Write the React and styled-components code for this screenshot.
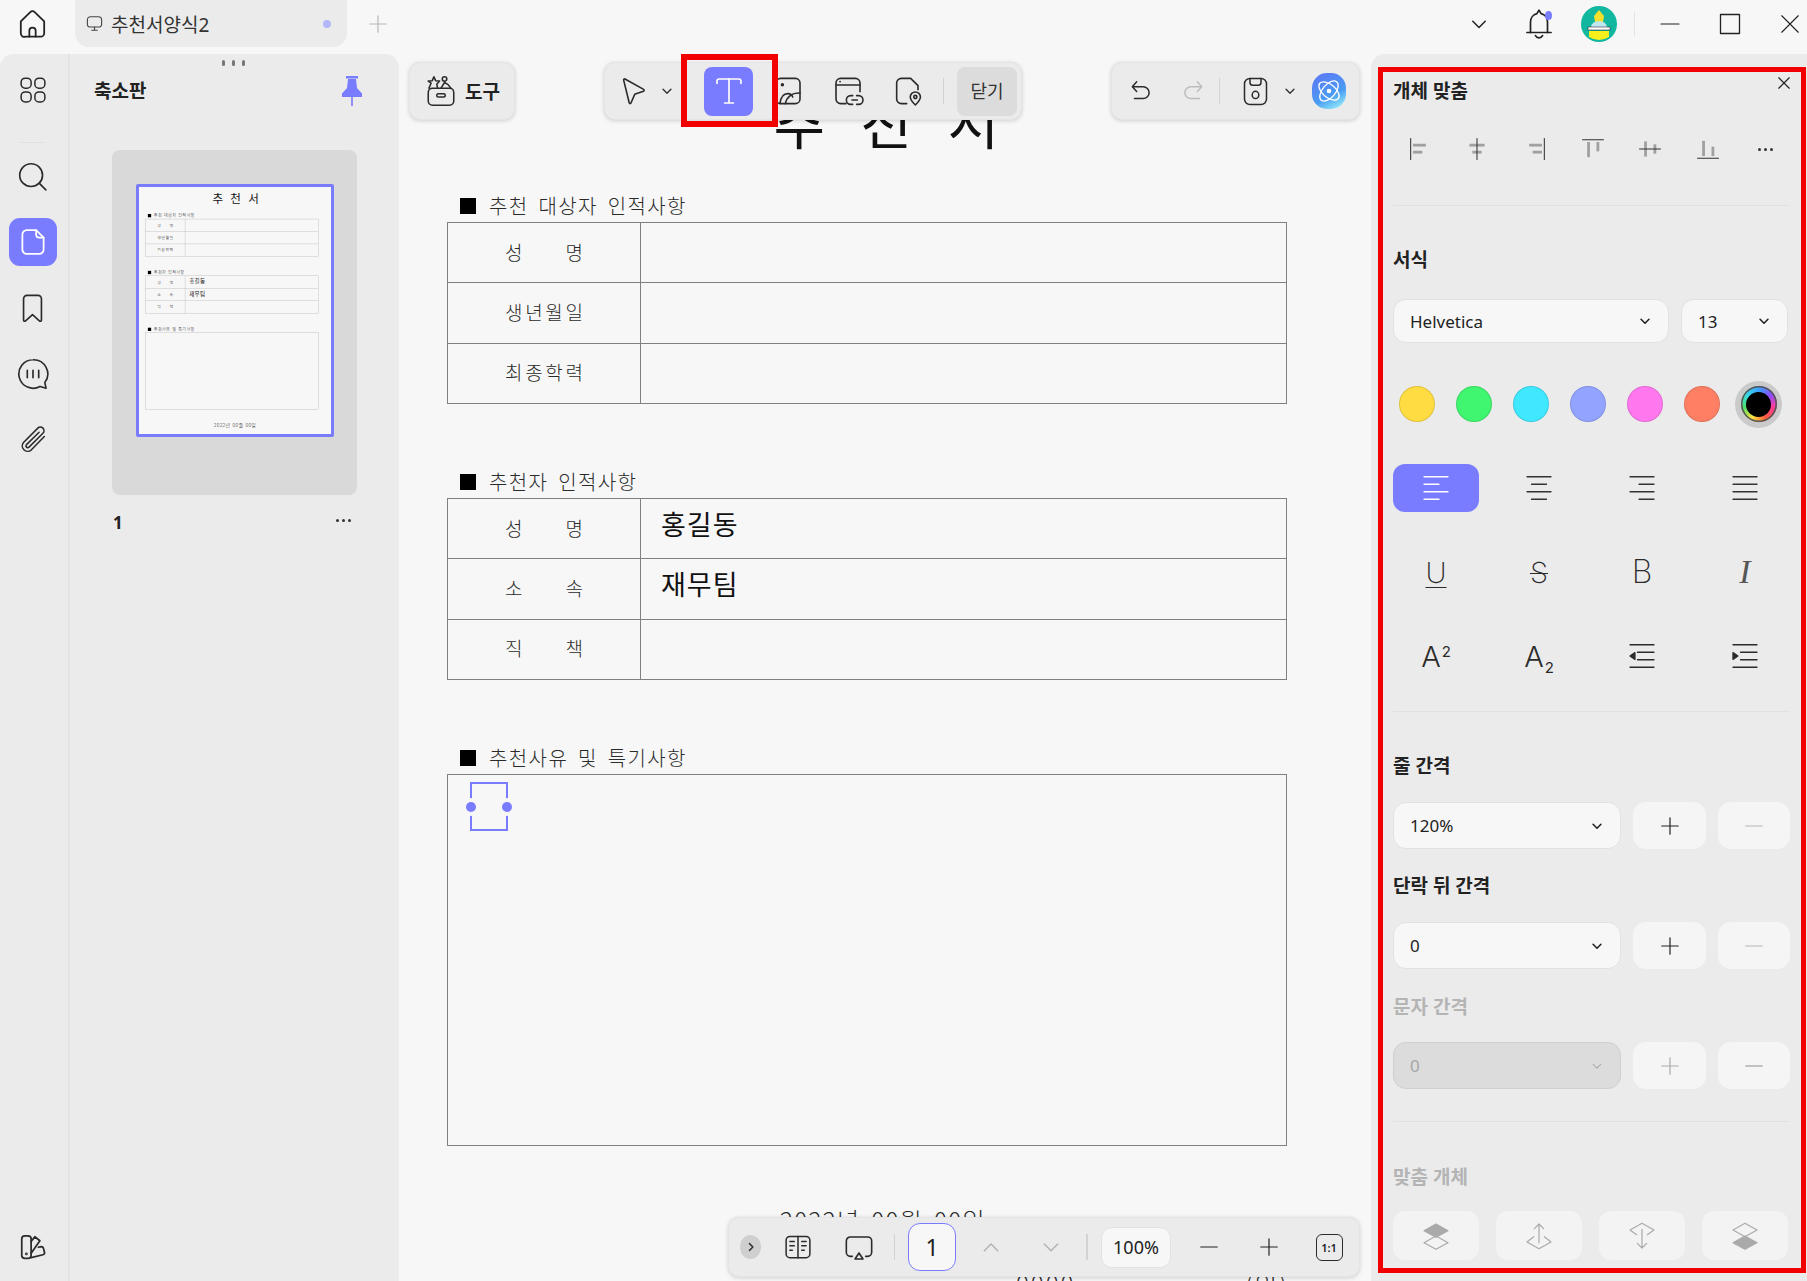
import React from "react";
import styled, { createGlobalStyle } from "styled-components";

const ACCENT = "#7a7cff";
const UI_FONT = `"Noto Sans", "Noto Sans CJK KR", sans-serif`;

const GlobalStyle = createGlobalStyle`
  html, body {
    margin: 0;
    padding: 0;
    width: 100%;
    height: 100%;
    overflow: hidden;
    background: #f7f7f7;
    font-family: ${UI_FONT};
    color: #222;
  }
  * { box-sizing: border-box; }
`;

// Icons
const Svg = styled.svg`
  display: block;
  flex: none;
  fill: none;
  stroke: ${(p) => p.$color || "currentColor"};
  stroke-width: ${(p) => p.$sw || 1.5};
  stroke-linecap: round;
  stroke-linejoin: round;
`;

const Icon = ({ size = 30, sw, color, children, box = 24 }) => (
  <Svg width={size} height={size} viewBox={`0 0 ${box} ${box}`} $sw={sw} $color={color}>
    {children}
  </Svg>
);

const HomeIcon = () => (
  <Icon size={33} sw={1.3}>
    <path d="M3.5 10.5 10.4 3.7a2.2 2.2 0 0 1 3.2 0l6.9 6.8V19a2.5 2.5 0 0 1-2.5 2.5h-11A2.5 2.5 0 0 1 3.5 19Z" />
    <path d="M9.7 21.5v-4.2a2.3 2.3 0 0 1 4.6 0v4.2" />
  </Icon>
);

const TabDocIcon = () => (
  <Icon size={19} sw={1.4} color="#444">
    <rect x="3" y="3.5" width="18" height="13" rx="4" />
    <path d="M12 16.5v4M8.5 20.5h7" />
  </Icon>
);

const GridIcon = () => (
  <Icon size={30} sw={1.2}>
    <rect x="2.5" y="2.5" width="8" height="8" rx="3.2" />
    <rect x="13.5" y="2.5" width="8" height="8" rx="3.2" />
    <rect x="2.5" y="13.5" width="8" height="8" rx="3.2" />
    <rect x="13.5" y="13.5" width="8" height="8" rx="3.2" />
  </Icon>
);

const SearchIcon = () => (
  <Icon size={33} sw={1.2}>
    <circle cx="11" cy="11" r="8.3" />
    <path d="m17 17 4.7 4.7" />
  </Icon>
);

const PageIcon = () => (
  <Icon size={30} sw={1.4} color="#fff">
    <path d="M7 2.5h7.5l6 6V18a3.5 3.5 0 0 1-3.5 3.5H7A3.5 3.5 0 0 1 3.5 18V6A3.5 3.5 0 0 1 7 2.5Z" />
    <path d="M14.5 2.5V6a2.5 2.5 0 0 0 2.5 2.5h3.5" />
  </Icon>
);

const BookmarkIcon = () => (
  <Icon size={33} sw={1.2}>
    <path d="M5.5 5a2.5 2.5 0 0 1 2.5-2.5h8A2.5 2.5 0 0 1 18.500 5v15.500a.8.8 0 0 1-1.300.6L12 16.500l-5.200 4.600a.8.8 0 0 1-1.300-.6Z" />
  </Icon>
);

const CommentIcon = () => (
  <Icon size={36} sw={1.1}>
    <path d="M12 2.500a9.500 9.500 0 1 0 4.700 17.800l4 1.200-.8-3.800A9.500 9.500 0 0 0 12 2.500Z" />
    <path d="M8.200 9.500v5M12 9.500v5M15.800 9.500v5" />
  </Icon>
);

const ClipIcon = () => (
  <Icon size={34} sw={1.1}>
    <path d="m20 9.500-9.300 9.600a3.800 3.800 0 0 1-5.400-5.300L15.400 3.600a2.500 2.500 0 0 1 3.600 3.600L9.200 17a1.200 1.200 0 0 1-1.800-1.700L16.300 6.500" />
  </Icon>
);

const SwatchIcon = () => (
  <Icon size={30} sw={1.4}>
    <rect x="3" y="3" width="7.500" height="18" rx="2.500" />
    <path d="M10.500 7.500 13.500 3.800l4 3.200-7 10M10.500 20.500l9.500-2.300a1.600 1.600 0 0 0 1.200-2l-.9-3.300a1.700 1.700 0 0 0-1.700-1.200l-2.300.5" />
    <circle cx="6.700" cy="17.500" r=".4" />
  </Icon>
);

const PinIcon = () => (
  <svg width="24" height="32" viewBox="0 0 24 32" fill={ACCENT}>
    <rect x="6" y="1" width="12" height="2.500" />
    <path d="M8 4h8l1 9 5 5.500V22H2v-3.500L7 13Z" />
    <rect x="11.200" y="22" width="1.600" height="9" />
  </svg>
);

const ToolBoxIcon = () => (
  <Icon size={34} sw={1.1}>
    <rect x="3" y="10" width="18" height="12" rx="3" />
    <rect x="9" y="14" width="6" height="2.200" rx="1.100" />
    <path d="m3.500 10 1.500-3.500-2-1.500 2.800-.3L7 2l1.200 2.700 2.800.3-2 2.200.6 2.800M12 10l2.500-4 2.500 1.500 2 2.500" />
    <circle cx="14.500" cy="3.500" r="1.600" />
  </Icon>
);

const CursorIcon = () => (
  <Icon size={32} sw={1.2}>
    <path d="M5 3.800a.7.7 0 0 1 1-.8l14 7.800a.7.7 0 0 1-.1 1.300l-6.200 2.200a1 1 0 0 0-.6.600L10.500 21a.7.7 0 0 1-1.300 0Z" />
  </Icon>
);

const TextIcon = () => (
  <Icon size={36} sw={1.1} color="#fff">
    <path d="M4 7V5.500C4 4.700 4.500 4 5.500 4h13c1 0 1.500.7 1.500 1.500V7" />
    <path d="M12 4v16M9 20h6" />
  </Icon>
);

const ImageIcon = () => (
  <Icon size={32} sw={1.2}>
    <rect x="3" y="2.500" width="18" height="19" rx="3.500" />
    <circle cx="7.800" cy="7.300" r=".7" />
    <path d="M6 21.500c.5-5 3-7.500 6-7.500 1.800 0 3 1 3.500 2.500M10 21.500c1-5 5-8.500 11-8" />
  </Icon>
);

const LinkIcon = () => (
  <Icon size={32} sw={1.2}>
    <path d="M21 12.500V6a3.500 3.500 0 0 0-3.500-3.500h-11A3.500 3.500 0 0 0 3 6v12a3.500 3.500 0 0 0 3.500 3.500h4" />
    <path d="M3 7.500h18" />
    <path d="M6 5h.1" />
    <path d="M15.500 15.500H14a2.500 2.500 0 0 0 0 6.500h1.500M18.500 15.500H20a2.500 2.500 0 0 1 0 6.500h-1.500M15 18.800h4" />
  </Icon>
);

const StampIcon = () => (
  <Icon size={32} sw={1.2}>
    <path d="M11 21.500H7A3.500 3.500 0 0 1 3.500 18V6A3.500 3.500 0 0 1 7 2.500h7l5.500 5.500v3" />
    <path d="M17.500 22.500c-2.400-2.400-3.800-4.300-3.800-6a3.800 3.800 0 0 1 7.600 0c0 1.700-1.400 3.600-3.800 6Z" />
    <circle cx="17.500" cy="16.500" r="1.200" />
  </Icon>
);

const UndoIcon = ({ color }) => (
  <Icon size={26} sw={1.4} color={color}>
    <path d="M8 3.500 4 8l4 4.500" />
    <path d="M4.500 8H14a5.500 5.500 0 0 1 0 11H6" />
  </Icon>
);

const RedoIcon = ({ color }) => (
  <Icon size={26} sw={1.4} color={color}>
    <path d="m16 3.500 4 4.500-4 4.500" />
    <path d="M19.500 8H10a5.500 5.500 0 0 0 0 11h8" />
  </Icon>
);

const SaveIcon = () => (
  <Icon size={33} sw={1.1}>
    <rect x="4" y="2.500" width="16" height="19" rx="4" />
    <path d="M8 2.500v3a2 2 0 0 0 2 2h4a2 2 0 0 0 2-2v-3" />
    <ellipse cx="12" cy="14.500" rx="2.400" ry="2.600" />
  </Icon>
);

const AiLogo = () => (
  <svg width="34" height="36" viewBox="0 0 34 36">
    <defs>
      <linearGradient id="aiGrad" x1="0.2" y1="0" x2="0.7" y2="1">
        <stop offset="0" stopColor="#5b79f5" />
        <stop offset="0.65" stopColor="#4a9cf3" />
        <stop offset="1" stopColor="#8fe6f7" />
      </linearGradient>
    </defs>
    <rect x="0" y="0" width="34" height="36" rx="15" fill="url(#aiGrad)" />
    <g fill="none" stroke="#fff" strokeWidth="1.300">
      <ellipse cx="17" cy="18" rx="12" ry="6.500" transform="rotate(40 17 18)" />
      <ellipse cx="17" cy="18" rx="12" ry="6.500" transform="rotate(-50 17 18)" />
    </g>
    <circle cx="17" cy="18" r="2.300" fill="#fff" />
  </svg>
);

const Avatar = () => (
  <svg width="36" height="36" viewBox="0 0 36 36">
    <circle cx="18" cy="18" r="18" fill="#12b7a0" />
    <path d="M18 4l5 6-1 6H14l-1-6Z" fill="#f4e12b" />
    <path d="M10 21a8 6 0 0 1 16 0Z" fill="#bfe7f0" />
    <rect x="7" y="21" width="22" height="3" fill="#fff" stroke="#333" strokeWidth=".6" />
    <path d="M8 25h20v6a18 18 0 0 1-20 0Z" fill="#f6ee1d" />
  </svg>
);

const Chevron = ({ size = 16, sw = 1.6, color, dir = "down" }) => (
  <Icon size={size} sw={sw} color={color} box={16}>
    {dir === "down" && <path d="m3.500 6 4.500 4.500L12.500 6" />}
    {dir === "up" && <path d="m3.500 10.500 4.500-4.500 4.500 4.500" />}
    {dir === "right" && <path d="m6 3.500 4.500 4.500L6 12.500" />}
  </Icon>
);

const BellIcon = () => (
  <Wrapped>
    <Icon size={34} sw={1.2}>
      <path d="M6 18V10.500a6 6 0 0 1 4.500-5.800L12 2.300l1.500 2.400A6 6 0 0 1 18 10.500V18" />
      <path d="M3.500 18h17" />
      <path d="M9.500 20.200a2.800 2.800 0 0 0 5 0" />
    </Icon>
    <BellDot />
  </Wrapped>
);

const PlainLines = ({ rows, color = "#333" }) => (
  <Icon size={36} sw={0.85} color={color}>
    {rows.map(([x1, x2], i) => (
      <path key={i} d={`M${x1} ${4.500 + i * 5}H${x2}`} />
    ))}
  </Icon>
);

const IndentIcon = ({ flip }) => (
  <Icon size={36} sw={0.85}>
    <path d="M4 4.500h16M4 19.500h16M9 9.500h11M9 14.500h11" />
    <path
      d={flip ? "M4 9.700 7.300 12 4 14.300Z" : "M7.300 9.700 4 12l3.300 2.300Z"}
      fill="currentColor"
    />
  </Icon>
);

const ALIGN_ICONS = [
  { line: "M4 3v18", bars: [[6, 7.500, 11, 2.400], [6, 13.500, 8, 2.400]] },
  { line: "M12 3v18", bars: [[5.500, 7.500, 13, 2.400], [8, 13.500, 8, 2.400]] },
  { line: "M20 3v18", bars: [[7, 7.500, 11, 2.400], [10, 13.500, 8, 2.400]] },
  { line: "M3 4h18", bars: [[7, 6, 2.400, 13], [15, 6, 2.400, 8]] },
  { line: "M3 12h18", bars: [[7, 5.500, 2.400, 13], [15, 8, 2.400, 8]] },
  { line: "M3 20h18", bars: [[7, 5, 2.400, 13], [15, 10, 2.400, 8]] },
];

const AlignIcon = ({ line, bars }) => (
  <Icon size={28} sw={0.9} color="#333">
    {bars.map(([x, y, w, h], i) => (
      <rect key={i} x={x} y={y} width={w} height={h} fill="#a0a0a0" stroke="none" />
    ))}
    <path d={line} />
  </Icon>
);

const StackIcon = ({ kind }) => (
  <Icon size={32} sw={0.9} color="#aaa">
    {kind === "front" && (
      <>
        <path d="m12 12 9 5-9 5-9-5Z" />
        <path d="m12 3 9 5-9 5-9-5Z" fill="#aaa" />
      </>
    )}
    {kind === "forward" && (
      <>
        <path d="M8 12.500 3 16.500l9 5 9-5-5-4" />
        <path d="M12 17V3M8.500 6.500 12 3l3.500 3.500" />
      </>
    )}
    {kind === "backward" && (
      <>
        <path d="M8 11 3 7.500l9-5 9 5-5 3.500" />
        <path d="M12 7v14M8.500 17.500 12 21l3.500-3.500" />
      </>
    )}
    {kind === "back" && (
      <>
        <path d="m12 2.500 9 5-9 5-9-5Z" />
        <path d="m12 12 9 5-9 5-9-5Z" fill="#aaa" />
      </>
    )}
  </Icon>
);

// Title bar
const Wrapped = styled.div`
  position: relative;
`;

const BellDot = styled.span`
  position: absolute;
  top: 4px;
  right: 4px;
  width: 7px;
  height: 9px;
  border-radius: 50%;
  background: ${ACCENT};
`;

const Page = styled.div`
  width: 1807px;
  height: 1281px;
  display: flex;
  flex-direction: column;
  overflow: hidden;
  background: #f7f7f7;
`;

const TitleBar = styled.header`
  height: 54px;
  flex: none;
  display: flex;
  align-items: flex-start;
  overflow: hidden;
`;

const HomeSlot = styled.div`
  width: 75px;
  height: 47px;
  padding-left: 16px;
  display: flex;
  align-items: center;
`;

const Tab = styled.div`
  width: 272px;
  height: 47px;
  padding: 0 16px 0 10px;
  background: #ebebeb;
  border-radius: 0 0 14px 14px;
  display: flex;
  align-items: center;
  gap: 7px;
  font-size: 19px;
  color: #333;
`;

const TabName = styled.span`
  flex: 1;
`;

const TabDot = styled.span`
  width: 8px;
  height: 8px;
  border-radius: 50%;
  background: #b5b7fb;
`;

const NewTab = styled.div`
  width: 62px;
  height: 47px;
  display: flex;
  align-items: center;
  justify-content: center;
  color: #b5b5b5;
`;

const Controls = styled.div`
  margin-left: auto;
  margin-right: -13px;
  height: 47px;
  display: flex;
  align-items: center;
`;

const ControlSlot = styled.div`
  width: 60px;
  height: 47px;
  display: flex;
  align-items: center;
  justify-content: center;
`;

const ControlDivider = styled.span`
  width: 1px;
  height: 24px;
  margin: 0 5px;
  background: #e3e3e3;
`;

// Main area
const Body = styled.div`
  flex: 1;
  min-height: 0;
  display: flex;
`;

const LeftPanel = styled.aside`
  width: 399px;
  flex: none;
  display: flex;
  background: #ebebeb;
  border-radius: 14px 14px 0 0;
`;

const Rail = styled.nav`
  width: 70px;
  flex: none;
  display: flex;
  flex-direction: column;
  align-items: center;
  padding: 12px 3px 10px 0;
  border-right: 2px solid #e3e3e3;
`;

const RailSlot = styled.div`
  width: 48px;
  height: 48px;
  flex: none;
  display: flex;
  align-items: center;
  justify-content: center;
  border-radius: 11px;
  color: #2b2b2b;
  background: ${(p) => (p.$active ? ACCENT : "transparent")};
`;

const RailRule = styled.div`
  width: 26px;
  height: 1px;
  margin: 28px 0 9px;
  background: #e1e1e1;
`;

const RailList = styled.div`
  display: flex;
  flex-direction: column;
  gap: 18px;
`;

const RailFoot = styled.div`
  margin-top: auto;
`;

const ThumbPanel = styled.section`
  flex: 1;
  min-width: 0;
  position: relative;
  padding: 0 0 0 42px;
`;

const GripDots = styled.div`
  position: absolute;
  top: 6px;
  left: 152px;
  display: flex;
  gap: 7px;
`;

const GripDot = styled.span`
  width: 3px;
  height: 6px;
  border-radius: 2px;
  background: #777;
`;

const ThumbHeader = styled.div`
  height: 74px;
  width: 270px;
  display: flex;
  align-items: center;
  justify-content: space-between;
  margin-left: -18px;
`;

const PanelTitle = styled.h2`
  margin: 0;
  font-size: 19px;
  font-weight: 700;
  line-height: 22px;
  color: #222;
`;

const ThumbCard = styled.div`
  width: 245px;
  height: 345px;
  margin-top: 22px;
  padding-top: 34px;
  display: flex;
  justify-content: center;
  align-items: flex-start;
  background: #d9d9d9;
  border-radius: 8px;
`;

const ThumbFrame = styled.div`
  width: 198px;
  height: 253px;
  border: 3px solid ${ACCENT};
  border-radius: 2px;
  background: #f7f7f7;
  overflow: hidden;
`;

const ThumbScale = styled.div`
  width: 932px;
  transform: scale(0.206);
  transform-origin: top left;
`;

const ThumbFoot = styled.div`
  width: 245px;
  margin-top: 16px;
  padding: 0 6px 0 1px;
  display: flex;
  align-items: center;
  justify-content: space-between;
`;

const ThumbNo = styled.span`
  font-size: 17px;
  font-weight: 700;
  color: #222;
`;

const ThumbMore = styled.div`
  margin-bottom: 4px;
`;

const More = styled.span`
  display: flex;
  gap: 3px;
`;

const MoreDot = styled.span`
  width: 3px;
  height: 3px;
  border-radius: 50%;
  background: ${(p) => p.$color || "#333"};
`;

const Dots = ({ color }) => (
  <More>
    <MoreDot $color={color} />
    <MoreDot $color={color} />
    <MoreDot $color={color} />
  </More>
);

// Document
const Center = styled.main`
  flex: 1;
  min-width: 0;
  position: relative;
  overflow: hidden;
  background: #f7f7f7;
`;

const CenterSheet = styled.div`
  margin: 13px 0 0 18px;
`;

const Sheet = styled.article`
  width: 932px;
  height: 1214px;
  padding: 0 62px 0 30px;
  font-family: "Noto Sans CJK KR", sans-serif;
  font-weight: 300;
  color: #2a2a2a;
  overflow: hidden;
`;

const DocTitle = styled.h1`
  margin: 23px 0 0;
  height: 60px;
  padding-left: 18px;
  width: 872px;
  text-align: center;
  font-size: 56px;
  font-weight: 400;
  line-height: 60px;
  letter-spacing: 11.5px;
  color: #111;
`;

const DocSection = styled.section`
  margin-top: ${(p) => p.$mt}px;
`;

const DocHeading = styled.div`
  height: 24px;
  margin-bottom: 4px;
  padding-left: 13px;
  display: flex;
  align-items: center;
  gap: 13px;
  font-size: 20px;
  letter-spacing: 1.4px;
  word-spacing: 4px;
  line-height: 24px;
`;

const Square = styled.span`
  width: 16px;
  height: 16px;
  background: #000;
`;

const DocTable = styled.table`
  width: 840px;
  height: 182px;
  border-collapse: collapse;
  table-layout: fixed;
`;

const DocRow = styled.tr`
  height: 60px;
`;

const LabelCell = styled.td`
  width: 193px;
  height: 60px;
  padding: 0 0 2px;
  border: 1px solid #808080;
`;

const ValueCell = styled.td`
  height: 60px;
  padding: 0 0 6px 20px;
  border: 1px solid #808080;
  font-family: "Liberation Sans", "Noto Sans CJK KR", sans-serif;
  font-size: 27px;
  font-weight: 400;
  line-height: 40px;
  letter-spacing: 1px;
  color: #111;
`;

const LabelText = styled.div`
  width: 78px;
  margin: 0 auto;
  display: flex;
  justify-content: space-between;
  font-size: 19px;
  line-height: 24px;
`;

const MemoBox = styled.div`
  position: relative;
  width: 840px;
  height: 372px;
  border: 1px solid #808080;
`;

const Caret = styled.div`
  position: absolute;
  top: 7px;
  left: 22px;
  width: 38px;
  height: 49px;
  border: 2px solid ${ACCENT};
`;

const Handle = styled.span`
  position: absolute;
  top: 18px;
  ${(p) => (p.$right ? "right: -6px;" : "left: -6px;")}
  width: 10px;
  height: 10px;
  border-radius: 50%;
  background: ${ACCENT};
  box-shadow: 0 0 0 4px #f7f7f7;
`;

const DateLine = styled.div`
  margin-top: 58px;
  width: 872px;
  text-align: center;
  font-size: 24px;
  letter-spacing: 1.4px;
  word-spacing: 4px;
  line-height: 32px;
`;

const SignLine = styled.div`
  margin-top: 32px;
  padding-left: 569px;
  display: flex;
  gap: 170px;
  font-size: 24px;
  letter-spacing: 2px;
  line-height: 30px;
`;

const DocRows = ({ rows }) => (
  <DocTable>
    <tbody>
      {rows.map(([label, value]) => (
        <DocRow key={label}>
          <LabelCell>
            <LabelText>
              {label.split("").map((ch, i) => (
                <span key={i}>{ch}</span>
              ))}
            </LabelText>
          </LabelCell>
          <ValueCell>{value}</ValueCell>
        </DocRow>
      ))}
    </tbody>
  </DocTable>
);

const DocumentSheet = ({ caret }) => (
  <Sheet>
    <DocTitle>추 천 서</DocTitle>
    <DocSection $mt={44}>
      <DocHeading>
        <Square />
        추천 대상자 인적사항
      </DocHeading>
      <DocRows rows={[["성명"], ["생년월일"], ["최종학력"]]} />
    </DocSection>
    <DocSection $mt={66}>
      <DocHeading>
        <Square />
        추천자 인적사항
      </DocHeading>
      <DocRows rows={[["성명", "홍길동"], ["소속", "재무팀"], ["직책"]]} />
    </DocSection>
    <DocSection $mt={66}>
      <DocHeading>
        <Square />
        추천사유 및 특기사항
      </DocHeading>
      <MemoBox>
        {caret && (
          <Caret>
            <Handle />
            <Handle $right />
          </Caret>
        )}
      </MemoBox>
    </DocSection>
    <DateLine>2022년 00월 00일</DateLine>
    <SignLine>
      <span>0000 대표</span>
      <span>(인)</span>
    </SignLine>
  </Sheet>
);

// Floating toolbars
const FloatBar = styled.div`
  position: absolute;
  top: ${(p) => p.$top}px;
  left: ${(p) => p.$left}px;
  width: ${(p) => p.$width}px;
  height: ${(p) => p.$height || 58}px;
  display: flex;
  align-items: center;
  background: #ebebeb;
  border: 1px solid #e4e4e4;
  border-radius: 11px;
  box-shadow: 0 1px 4px rgba(0, 0, 0, 0.16);
  color: #2b2b2b;
`;

const BarSlot = styled.div`
  flex: none;
  width: ${(p) => p.$w}px;
  height: 100%;
  display: flex;
  align-items: center;
  justify-content: center;
`;

const BarDivider = styled.span`
  flex: none;
  width: ${(p) => p.$w || 1}px;
  height: 26px;
  background: #d3d3d3;
`;

const BarGap = styled.span`
  flex: none;
  width: ${(p) => p.$w}px;
`;

const ToolLabel = styled.span`
  font-size: 19px;
  font-weight: 700;
  margin-left: 7px;
  color: #222;
`;

const TextTool = styled.div`
  flex: none;
  width: 49px;
  height: 49px;
  border-radius: 8px;
  background: ${ACCENT};
  display: flex;
  align-items: center;
  justify-content: center;
`;

const CloseTool = styled.div`
  flex: none;
  width: 60px;
  height: 49px;
  padding-bottom: 2px;
  border-radius: 8px;
  background: #dcdcdc;
  display: flex;
  align-items: center;
  justify-content: center;
  font-size: 18px;
  color: #333;
`;

const ExpandDot = styled.div`
  width: 24px;
  height: 24px;
  border-radius: 50%;
  background: #cfcfcf;
  display: flex;
  align-items: center;
  justify-content: center;
`;

const PageBox = styled.div`
  flex: none;
  width: 48px;
  height: 48px;
  border: 1.5px solid ${ACCENT};
  border-radius: 12px;
  background: #f7f7f7;
  display: flex;
  align-items: center;
  justify-content: center;
  font-size: 23px;
  color: #222;
`;

const ZoomBox = styled.div`
  flex: none;
  width: 70px;
  height: 41px;
  border: 1px solid #e2e2e2;
  border-radius: 11px;
  background: #f7f7f7;
  display: flex;
  align-items: center;
  justify-content: center;
  font-size: 18px;
  color: #222;
`;

const OneToOne = styled.div`
  width: 27px;
  height: 27px;
  border: 1.4px solid #2b2b2b;
  border-radius: 6px;
  display: flex;
  align-items: center;
  justify-content: center;
  font-size: 11px;
  font-weight: 600;
  color: #222;
`;

// Right panel
const RightPanel = styled.aside`
  width: 436px;
  flex: none;
  position: relative;
  padding: 26px 17px 0 22px;
  background: #ebebeb;
  border-radius: 14px 0 0 0;
`;

const RedFrame = styled.div`
  position: absolute;
  top: 13px;
  left: 7px;
  right: 1px;
  bottom: 8px;
  border: 5px solid #f20000;
  pointer-events: none;
  z-index: 3;
`;

const RedMark = styled.div`
  position: absolute;
  top: 0;
  left: 282px;
  width: 97px;
  height: 73px;
  border: 6px solid #f20000;
  pointer-events: none;
  z-index: 3;
`;

const CloseX = styled.div`
  position: absolute;
  top: 22px;
  right: 16px;
  color: #222;
`;

const SectionTitle = styled.h3`
  margin: ${(p) => p.$mt || 0}px 0 0;
  font-size: 19px;
  font-weight: 700;
  line-height: 22px;
  color: ${(p) => (p.$muted ? "#b4b4b4" : "#222")};
`;

const AlignRow = styled.div`
  margin: 27px 0 0 -2px;
  height: 40px;
  display: grid;
  grid-template-columns: repeat(7, 57.6px);
`;

const Cell = styled.div`
  display: flex;
  align-items: center;
  justify-content: center;
`;

const Rule = styled.div`
  margin-top: ${(p) => p.$mt}px;
  height: 1px;
  background: #e1e1e1;
`;

const FontRow = styled.div`
  margin-top: 28px;
  display: grid;
  grid-template-columns: 276px 107px;
  gap: 12px;
`;

const Select = styled.div`
  height: ${(p) => p.$h || 47}px;
  padding: 0 16px 0 16px;
  display: flex;
  align-items: center;
  justify-content: space-between;
  border-radius: 13px;
  border: 1px solid ${(p) => (p.$disabled ? "#cfcfcf" : "#e2e2e2")};
  background: ${(p) => (p.$disabled ? "#dcdcdc" : "#f7f7f7")};
  color: ${(p) => (p.$disabled ? "#a6a6a6" : "#222")};
  font-size: 17px;
`;

const ColorRow = styled.div`
  margin: 37px 0 0 -5px;
  height: 48px;
  display: grid;
  grid-template-columns: repeat(7, 57px);
`;

const ColorDot = styled.span`
  width: 36px;
  height: 36px;
  border-radius: 50%;
  background: ${(p) => p.$bg};
  border: 1px solid rgba(0, 0, 0, 0.12);
`;

const PickerHalo = styled.span`
  width: 47px;
  height: 47px;
  border-radius: 50%;
  background: #cacaca;
  display: flex;
  align-items: center;
  justify-content: center;
`;

const PickerRing = styled.span`
  width: 36px;
  height: 36px;
  border-radius: 50%;
  background: conic-gradient(#3aa0ff, #8a4dff, #ff3d9a, #ff5a3c, #ffe23c, #4be06a, #38d9e8, #3aa0ff);
  display: flex;
  align-items: center;
  justify-content: center;
  box-shadow: 0 0 0 1.500px #555 inset;
`;

const PickerCore = styled.span`
  width: 25px;
  height: 25px;
  border-radius: 50%;
  background: #000;
`;

const FormatGrid = styled.div`
  margin-top: 36px;
  display: grid;
  grid-template-columns: repeat(4, 86px);
  grid-auto-rows: 48px;
  column-gap: 17px;
  row-gap: 36px;
`;

const FormatBtn = styled.div`
  display: flex;
  align-items: center;
  justify-content: center;
  border-radius: 12px;
  background: ${(p) => (p.$active ? ACCENT : "transparent")};
  color: #2b2b2b;
`;

const Glyph = styled.span`
  font-family: ${(p) => p.$font || `"Inter", sans-serif`};
  font-size: ${(p) => p.$size || 29}px;
  font-weight: ${(p) => p.$weight || 300};
  font-style: ${(p) => (p.$italic ? "italic" : "normal")};
  text-decoration: ${(p) => p.$deco || "none"};
  text-decoration-thickness: 1px;
  text-underline-offset: 4px;
  color: ${(p) => p.$color || "inherit"};
  line-height: 1;
`;

const Script = styled.span`
  font-family: "Inter", sans-serif;
  font-size: 15px;
  font-weight: 400;
  position: relative;
  top: ${(p) => (p.$sub ? 6 : -10)}px;
  margin-left: 1px;
`;

const StepRow = styled.div`
  margin-top: ${(p) => p.$mt}px;
  display: grid;
  grid-template-columns: 228px 73px 72px;
  gap: 12px;
`;

const StepBtn = styled.div`
  height: 47px;
  display: flex;
  align-items: center;
  justify-content: center;
  border-radius: 13px;
  background: #f5f5f5;
`;

const OrderRow = styled.div`
  margin-top: 23px;
  display: grid;
  grid-template-columns: repeat(4, 86px);
  column-gap: 17px;
`;

const OrderBtn = styled.div`
  height: 49px;
  display: flex;
  align-items: center;
  justify-content: center;
  border-radius: 12px;
  background: #f3f3f3;
`;

const CrossIcon = ({ size = 22, color, sw = 1.3 }) => (
  <Icon size={size} sw={sw} color={color}>
    <path d="M12 3v18M3 12h18" />
  </Icon>
);

const DashIcon = ({ size = 22, color, sw = 1.3 }) => (
  <Icon size={size} sw={sw} color={color}>
    <path d="M3 12h18" />
  </Icon>
);

const XIcon = ({ size, sw = 1.2 }) => (
  <Icon size={size} sw={sw}>
    <path d="M3 3l18 18M21 3 3 21" />
  </Icon>
);

const COLORS = ["#ffdd42", "#40f56f", "#3fe8ff", "#92a4ff", "#ff78ee", "#ff7f64"];

const StepControl = ({ value, mt, disabled }) => (
  <StepRow $mt={mt}>
    <Select $disabled={disabled}>
      {value}
      <Chevron size={14} sw={disabled ? 1.2 : 1.8} color={disabled ? "#a8a8a8" : "#222"} />
    </Select>
    <StepBtn>
      <CrossIcon color={disabled ? "#ababab" : "#222"} />
    </StepBtn>
    <StepBtn>
      <DashIcon color={disabled ? "#8f8f8f" : "#b5b5b5"} />
    </StepBtn>
  </StepRow>
);

const App = () => (
  <Page>
    <GlobalStyle />
    <TitleBar>
      <HomeSlot>
        <HomeIcon />
      </HomeSlot>
      <Tab>
        <TabDocIcon />
        <TabName>추천서양식2</TabName>
        <TabDot />
      </Tab>
      <NewTab>
        <CrossIcon color="#b8b8b8" />
      </NewTab>
      <Controls>
        <ControlSlot>
          <Chevron size={22} sw={1.1} color="#222" />
        </ControlSlot>
        <ControlSlot>
          <BellIcon />
        </ControlSlot>
        <ControlSlot>
          <Avatar />
        </ControlSlot>
        <ControlDivider />
        <ControlSlot>
          <DashIcon size={24} color="#222" sw={1.2} />
        </ControlSlot>
        <ControlSlot>
          <Icon size={24} sw={1.3}>
            <rect x="2.500" y="2.500" width="19" height="19" />
          </Icon>
        </ControlSlot>
        <ControlSlot>
          <XIcon size={22} />
        </ControlSlot>
      </Controls>
    </TitleBar>
    <Body>
      <LeftPanel>
        <Rail>
          <RailSlot>
            <GridIcon />
          </RailSlot>
          <RailRule />
          <RailList>
            <RailSlot>
              <SearchIcon />
            </RailSlot>
            <RailSlot $active>
              <PageIcon />
            </RailSlot>
            <RailSlot>
              <BookmarkIcon />
            </RailSlot>
            <RailSlot>
              <CommentIcon />
            </RailSlot>
            <RailSlot>
              <ClipIcon />
            </RailSlot>
          </RailList>
          <RailFoot>
            <RailSlot>
              <SwatchIcon />
            </RailSlot>
          </RailFoot>
        </Rail>
        <ThumbPanel>
          <GripDots>
            <GripDot />
            <GripDot />
            <GripDot />
          </GripDots>
          <ThumbHeader>
            <PanelTitle>축소판</PanelTitle>
            <PinIcon />
          </ThumbHeader>
          <ThumbCard>
            <ThumbFrame>
              <ThumbScale>
                <DocumentSheet />
              </ThumbScale>
            </ThumbFrame>
          </ThumbCard>
          <ThumbFoot>
            <ThumbNo>1</ThumbNo>
            <ThumbMore>
              <Dots />
            </ThumbMore>
          </ThumbFoot>
        </ThumbPanel>
      </LeftPanel>

      <Center>
        <CenterSheet>
          <DocumentSheet caret />
        </CenterSheet>

        <FloatBar $top={8} $left={10} $width={106}>
          <BarGap $w={14} />
          <ToolBoxIcon />
          <ToolLabel>도구</ToolLabel>
        </FloatBar>

        <FloatBar $top={8} $left={205} $width={418}>
          <BarGap $w={11} />
          <BarSlot $w={34}>
            <CursorIcon />
          </BarSlot>
          <BarSlot $w={34}>
            <Chevron size={14} sw={1.6} color="#333" />
          </BarSlot>
          <BarDivider />
          <BarGap $w={19} />
          <TextTool>
            <TextIcon />
          </TextTool>
          <BarGap $w={5} />
          <BarSlot $w={60}>
            <ImageIcon />
          </BarSlot>
          <BarSlot $w={60}>
            <LinkIcon />
          </BarSlot>
          <BarSlot $w={60}>
            <StampIcon />
          </BarSlot>
          <BarGap $w={5} />
          <BarDivider />
          <BarGap $w={13} />
          <CloseTool>닫기</CloseTool>
        </FloatBar>

        <FloatBar $top={8} $left={712} $width={249}>
          <BarGap $w={3} />
          <BarSlot $w={52}>
            <UndoIcon color="#2b2b2b" />
          </BarSlot>
          <BarSlot $w={52}>
            <RedoIcon color="#bdbdbd" />
          </BarSlot>
          <BarDivider />
          <BarGap $w={7} />
          <BarSlot $w={56}>
            <SaveIcon />
          </BarSlot>
          <Chevron size={14} sw={1.6} color="#333" />
          <BarGap $w={15} />
          <AiLogo />
        </FloatBar>

        <FloatBar $top={1163} $left={329} $width={632} $height={60}>
          <BarGap $w={11} />
          <ExpandDot>
            <Chevron size={12} sw={2} color="#333" dir="right" />
          </ExpandDot>
          <BarGap $w={13} />
          <BarSlot $w={48}>
            <Icon size={30} sw={1.2}>
              <rect x="2.500" y="3.500" width="19" height="17" rx="3" />
              <path d="M12 3.500v17M5.500 7.500h3.500M5.500 11h3.500M5.500 14.500h2M15 7.500h3.500M15 11h3.500M15 14.500h2" />
            </Icon>
          </BarSlot>
          <BarGap $w={13} />
          <BarSlot $w={48}>
            <Icon size={32} sw={1.2}>
              <path d="M7 19H5.500A3 3 0 0 1 2.500 16V7.500a3 3 0 0 1 3-3h13a3 3 0 0 1 3 3V16a3 3 0 0 1-3 3H17" />
              <path d="m12 16.500 3 4.500H9Z" />
            </Icon>
          </BarSlot>
          <BarGap $w={11} />
          <BarDivider />
          <BarGap $w={13} />
          <PageBox>1</PageBox>
          <BarGap $w={5} />
          <BarSlot $w={60}>
            <Chevron size={24} sw={0.9} color="#b0b0b0" dir="up" />
          </BarSlot>
          <BarSlot $w={60}>
            <Chevron size={24} sw={0.9} color="#b0b0b0" />
          </BarSlot>
          <BarGap $w={5} />
          <BarDivider $w={2} />
          <BarGap $w={13} />
          <ZoomBox>100%</ZoomBox>
          <BarGap $w={8} />
          <BarSlot $w={60}>
            <DashIcon size={22} color="#222" />
          </BarSlot>
          <BarSlot $w={60}>
            <CrossIcon size={22} color="#222" />
          </BarSlot>
          <BarSlot $w={60}>
            <OneToOne>1:1</OneToOne>
          </BarSlot>
        </FloatBar>

        <RedMark />
      </Center>

      <RightPanel>
        <RedFrame />
        <CloseX>
          <XIcon size={14} sw={2} />
        </CloseX>
        <SectionTitle>개체 맞춤</SectionTitle>
        <AlignRow>
          {ALIGN_ICONS.map((icon, i) => (
            <Cell key={i}>
              <AlignIcon {...icon} />
            </Cell>
          ))}
          <Cell>
            <Dots />
          </Cell>
        </AlignRow>
        <Rule $mt={36} />
        <SectionTitle $mt={43}>서식</SectionTitle>
        <FontRow>
          <Select $h={44}>
            Helvetica
            <Chevron size={14} sw={1.8} color="#222" />
          </Select>
          <Select $h={44}>
            13
            <Chevron size={14} sw={1.8} color="#222" />
          </Select>
        </FontRow>
        <ColorRow>
          {COLORS.map((c) => (
            <Cell key={c}>
              <ColorDot $bg={c} />
            </Cell>
          ))}
          <Cell>
            <PickerHalo>
              <PickerRing>
                <PickerCore />
              </PickerRing>
            </PickerHalo>
          </Cell>
        </ColorRow>
        <FormatGrid>
          <FormatBtn $active>
            <PlainLines color="#fff" rows={[[4, 20], [4, 14], [4, 20], [4, 14]]} />
          </FormatBtn>
          <FormatBtn>
            <PlainLines rows={[[4, 20], [7, 17], [4, 20], [7, 17]]} />
          </FormatBtn>
          <FormatBtn>
            <PlainLines rows={[[4, 20], [10, 20], [4, 20], [10, 20]]} />
          </FormatBtn>
          <FormatBtn>
            <PlainLines rows={[[4, 20], [4, 20], [4, 20], [4, 20]]} />
          </FormatBtn>

          <FormatBtn>
            <Glyph $deco="underline" $weight={200}>
              U
            </Glyph>
          </FormatBtn>
          <FormatBtn>
            <Glyph $deco="line-through" $weight={200}>
              S
            </Glyph>
          </FormatBtn>
          <FormatBtn>
            <Glyph $size={32} $weight={200}>
              B
            </Glyph>
          </FormatBtn>
          <FormatBtn>
            <Glyph $font={`"Liberation Serif", serif`} $size={34} $italic $color="#555">
              I
            </Glyph>
          </FormatBtn>

          <FormatBtn>
            <Glyph>
              A<Script>2</Script>
            </Glyph>
          </FormatBtn>
          <FormatBtn>
            <Glyph>
              A<Script $sub>2</Script>
            </Glyph>
          </FormatBtn>
          <FormatBtn>
            <IndentIcon />
          </FormatBtn>
          <FormatBtn>
            <IndentIcon flip />
          </FormatBtn>
        </FormatGrid>
        <Rule $mt={31} />
        <SectionTitle $mt={43}>줄 간격</SectionTitle>
        <StepControl value="120%" mt={25} />
        <SectionTitle $mt={26}>단락 뒤 간격</SectionTitle>
        <StepControl value="0" mt={25} />
        <SectionTitle $mt={27} $muted>
          문자 간격
        </SectionTitle>
        <StepControl value="0" mt={24} disabled />
        <Rule $mt={32} />
        <SectionTitle $mt={44} $muted>
          맞춤 개체
        </SectionTitle>
        <OrderRow>
          {["front", "forward", "backward", "back"].map((kind) => (
            <OrderBtn key={kind}>
              <StackIcon kind={kind} />
            </OrderBtn>
          ))}
        </OrderRow>
      </RightPanel>
    </Body>
  </Page>
);

export default App;
